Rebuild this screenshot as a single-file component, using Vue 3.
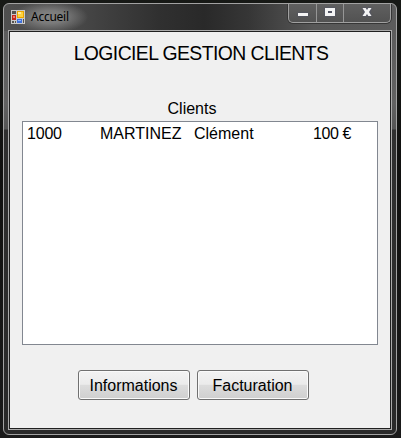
<script setup>
const clients = [{ id: '1000', nom: 'MARTINEZ', prenom: 'Clément', solde: '100 €' }]
const actions = ['Informations', 'Facturation']
</script>

<template>
  <div class="desktop">
    <div class="window">
      <header class="titlebar">
        <svg class="app-icon" width="14" height="14" viewBox="0 0 14 14" shape-rendering="crispEdges">
          <rect width="14" height="14" fill="#c9c9c9" />
          <rect x="1" y="1" width="4" height="3" fill="#55534f" />
          <rect x="1" y="5" width="4" height="5" fill="#c5281c" />
          <rect x="2" y="6" width="2" height="2" fill="#ec796c" />
          <rect x="1" y="11" width="2" height="2" fill="#55534f" />
          <rect x="4" y="11" width="1" height="2" fill="#55534f" />
          <rect x="6" y="1" width="7" height="7" fill="#e9a400" />
          <rect x="7" y="2" width="5" height="5" fill="#ffd33d" />
          <rect x="7" y="2" width="3" height="2" fill="#ffeaa0" />
          <rect x="6" y="9" width="5" height="4" fill="#3e70dc" />
          <rect x="7" y="10" width="3" height="1" fill="#8db4ff" />
          <rect x="12" y="9" width="1" height="4" fill="#55534f" />
        </svg>
        <span class="caption">Accueil</span>
        <div class="controls">
          <span class="control">
            <svg width="12" height="10" viewBox="0 0 12 10"><rect x="1" y="6" width="10" height="3" fill="#f4f4f4" /></svg>
          </span>
          <span class="control">
            <svg width="12" height="10" viewBox="0 0 12 10"><path d="M1 1H11V9H1ZM4 4V6H8V4Z" fill="#f4f4f4" fill-rule="evenodd" /></svg>
          </span>
          <span class="control close">
            <svg width="12" height="10" viewBox="0 0 12 10"><path d="M1.5 1H4.7L6 3L7.3 1H10.5L8 5L10.5 9H7.3L6 7L4.7 9H1.5L4 5Z" fill="#f4f4f4" /></svg>
          </span>
        </div>
      </header>
      <main class="client-area">
        <h1>LOGICIEL GESTION CLIENTS</h1>
        <h2>Clients</h2>
        <div class="listbox">
          <div v-for="c in clients" :key="c.id" class="row">
            <span>{{ c.id }}</span><span class="nom">{{ c.nom }}</span><span>{{ c.prenom }}</span><span class="solde">{{ c.solde }}</span>
          </div>
        </div>
        <div class="actions">
          <button v-for="a in actions" :key="a">{{ a }}</button>
        </div>
      </main>
    </div>
  </div>
</template>

<style>
body { background: #141414; overflow: hidden; }
</style>

<style scoped>
* { box-sizing: border-box; }
.desktop {
  width: 401px;
  height: 438px;
  padding: 3px 4px 3px 3px;
  background: linear-gradient(#171916, #10100f 40%, #1a1a1a);
  font-family: "Liberation Sans", Arial, sans-serif;
  color: #000;
}
.window {
  height: 432px;
  padding: 0 4px 4px;
  border: 1px solid #a2a2a2;
  border-radius: 6px;
  background:
    radial-gradient(ellipse 38px 16px at 46px 13px, #858585 0, #7a7a7a 40%, transparent 100%) no-repeat,
    linear-gradient(90deg, #505050 0, #464646 80px, #303030 155px, #292929 200px, #363636 245px, #575757 310px, #5c5c5c 100%) 0 0 / 100% 27px no-repeat,
    linear-gradient(#5b5b5b 0, #626262 100px, #555 125px, #303030 126px, #292929 100%);
}
.titlebar {
  height: 26px;
  display: flex;
  align-items: flex-start;
  padding-left: 3px;
}
.app-icon { margin-top: 6px; flex: none; }
.caption {
  margin: 5px 0 0 6px;
  font: 12px/16px "Noto Sans", "Open Sans", sans-serif;
  letter-spacing: -0.25px;
}
.controls {
  display: flex;
  margin-left: auto;
  margin-right: 1px;
  width: 103px;
  height: 19px;
  border: 1px solid #a0a0a0;
  border-top: 0;
  border-radius: 0 0 5px 5px;
  background: linear-gradient(#606060, #525252);
  box-shadow: 0 0 0 1px #363636;
  clip-path: inset(0 -1px -1px -1px);
}
.control {
  width: 28px;
  padding-top: 3px;
  display: flex;
  justify-content: center;
  border-right: 1px solid #969696;
}
.control + .control { width: 27px; }
.control svg { display: block; flex: none; filter: drop-shadow(0 0 1px #4c506b); }
.control.close { flex: 1; border: 0; }
.client-area {
  height: 400px;
  display: flex;
  flex-direction: column;
  align-items: center;
  border: 1px solid #aaa;
  background: #f0f0f0;
  box-shadow: inset 0 0 0 1px #202020;
}
h1 {
  margin: 10px 0 0 2px;
  font-size: 19.4px;
  line-height: 24px;
  font-weight: 400;
  letter-spacing: -0.58px;
  white-space: nowrap;
}
h2 {
  margin: 34px 0 0 -16px;
  font-size: 16px;
  line-height: 20px;
  font-weight: 400;
}
.listbox {
  width: 356px;
  height: 224px;
  margin-top: 2px;
  padding: 2px 3px 2px 4px;
  border: 1px solid #828790;
  background: #fff;
}
.row {
  display: grid;
  grid-template-columns: 73px 94px 119px 1fr;
  font-size: 16px;
  line-height: 20px;
  white-space: nowrap;
}
.row > span:first-child { letter-spacing: -0.2px; }
.solde { letter-spacing: -0.4px; }
.actions {
  display: flex;
  gap: 7px;
  margin: 25px 0 0 -13px;
}
button {
  width: 112px;
  height: 30px;
  padding: 2px 1px 0 0;
  border: 1px solid #707070;
  border-radius: 3px;
  background: linear-gradient(#f2f2f2, #ebebeb 48%, #dddddd 49%, #cfcfcf);
  box-shadow: inset 0 0 0 1px #fafafa;
  font: 16px/20px "Liberation Sans", Arial, sans-serif;
  color: #000;
}
</style>
